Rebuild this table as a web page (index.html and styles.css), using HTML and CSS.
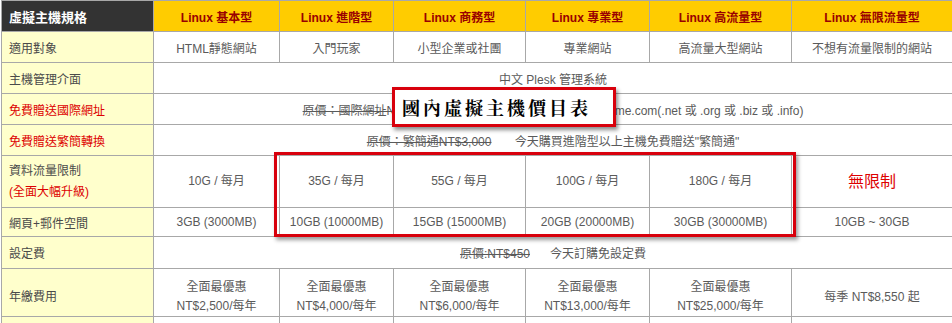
FILE: index.html
```html
<!DOCTYPE html>
<html lang="zh-Hant">
<head>
<meta charset="utf-8">
<title>國內虛擬主機價目表</title>
<link rel="stylesheet" href="styles.css">
</head>
<body>
<div class="wrap">
  <table class="price">
    <colgroup>
      <col class="c0"><col class="c1"><col class="c2"><col class="c3"><col class="c4"><col class="c5"><col class="c6">
    </colgroup>
    <tr class="head">
      <th class="corner">虛擬主機規格</th>
      <th>Linux 基本型</th>
      <th>Linux 進階型</th>
      <th>Linux 商務型</th>
      <th>Linux 專業型</th>
      <th>Linux 高流量型</th>
      <th>Linux 無限流量型</th>
    </tr>
    <tr class="r31">
      <td class="lab">適用對象</td>
      <td>HTML靜態網站</td>
      <td>入門玩家</td>
      <td>小型企業或社團</td>
      <td>專業網站</td>
      <td>高流量大型網站</td>
      <td>不想有流量限制的網站</td>
    </tr>
    <tr class="r31">
      <td class="lab">主機管理介面</td>
      <td colspan="6">中文 Plesk 管理系統</td>
    </tr>
    <tr class="r31">
      <td class="lab red">免費贈送國際網址</td>
      <td colspan="6"><s>原價：國際網址NT$800</s>&nbsp;&nbsp;&nbsp;&nbsp;今天購買即贈送國際網址 yourname.com(.net 或 .org 或 .biz 或 .info)</td>
    </tr>
    <tr class="r31">
      <td class="lab red">免費贈送繁簡轉換</td>
      <td colspan="6"><s>原價：繁簡通NT$3,000</s>&nbsp;&nbsp;&nbsp;&nbsp;&nbsp;&nbsp; 今天購買進階型以上主機免費贈送"繁簡通"</td>
    </tr>
    <tr class="r52">
      <td class="lab">資料流量限制<br><span class="red">(全面大幅升級)</span></td>
      <td>10G / 每月</td>
      <td>35G / 每月</td>
      <td>55G / 每月</td>
      <td>100G / 每月</td>
      <td>180G / 每月</td>
      <td class="unl">無限制</td>
    </tr>
    <tr class="r29">
      <td class="lab">網頁+郵件空間</td>
      <td>3GB (3000MB)</td>
      <td>10GB (10000MB)</td>
      <td>15GB (15000MB)</td>
      <td>20GB (20000MB)</td>
      <td>30GB (30000MB)</td>
      <td>10GB ~ 30GB</td>
    </tr>
    <tr class="r32">
      <td class="lab">設定費</td>
      <td colspan="6"><s>原價:NT$450</s>&nbsp;&nbsp;&nbsp;&nbsp;&nbsp; 今天訂購免設定費</td>
    </tr>
    <tr class="r42">
      <td class="lab">年繳費用</td>
      <td>全面最優惠<br>NT$2,500/每年</td>
      <td>全面最優惠<br>NT$4,000/每年</td>
      <td>全面最優惠<br>NT$6,000/每年</td>
      <td>全面最優惠<br>NT$13,000/每年</td>
      <td>全面最優惠<br>NT$25,000/每年</td>
      <td>每季 NT$8,550 起</td>
    </tr>
    <tr class="r31">
      <td class="lab"></td>
      <td></td><td></td><td></td><td></td><td></td><td></td>
    </tr>
  </table>
  <div class="title-box">國內虛擬主機價目表</div>
  <div class="highlight"></div>
</div>
</body>
</html>
```
FILE: styles.css
```css
html, body {
  margin: 0;
  padding: 0;
  background: #ffffff;
}
.wrap {
  position: relative;
  width: 952px;
  height: 323px;
  overflow: hidden;
}
.price {
  margin-left: 1px;
  border-collapse: collapse;
  table-layout: fixed;
  width: 951px;
  font-family: "Liberation Sans", "Noto Sans CJK TC", sans-serif;
  font-size: 12px;
  color: #5a5a5a;
}
.c0 { width: 152px; }
.c1 { width: 126px; }
.c2 { width: 114px; }
.c3 { width: 132px; }
.c4 { width: 124px; }
.c5 { width: 142px; }
.c6 { width: 161px; }
.price th, .price td {
  border: 1px solid #a8a8a8;
  padding: 0;
  text-align: center;
  vertical-align: middle;
}
.head th {
  height: 30px;
  background: #ffcc00;
  color: #990000;
  font-weight: bold;
  font-size: 12px;
}
.head th.corner {
  background: #333333;
  color: #ffffff;
  text-align: left;
  padding-left: 7px;
  font-size: 13px;
}
.price td.lab {
  background: #ffffcc;
  text-align: left;
  padding-left: 7px;
  color: #4a4a4a;
}
.red, .price td.red { color: #dd0000; }
.r31 td { height: 30px; }
.r52 td { height: 51px; line-height: 21px; }
.r29 td { height: 28px; }
.r32 td { height: 31px; }
.r42 td {
  height: 32px;
  line-height: 19px;
  padding-top: 9px;
}
.price td.unl {
  color: #dd0000;
  font-size: 16px;
}
s { text-decoration: line-through; }
.title-box {
  position: absolute;
  left: 392px;
  top: 87px;
  width: 211px;
  height: 34px;
  border: 3px solid #d8000c;
  background: #ffffff;
  box-shadow: 2px 3px 4px rgba(0, 0, 0, 0.45);
  font-family: "Noto Serif CJK TC", "Noto Sans CJK TC", serif;
  font-weight: bold;
  font-size: 18px;
  letter-spacing: 3px;
  color: #000000;
  line-height: 35px;
  padding-left: 7px;
  box-sizing: content-box;
}
.highlight {
  position: absolute;
  left: 274px;
  top: 152px;
  width: 516px;
  height: 79px;
  border: 3px solid #d8000c;
  box-shadow: 2px 3px 4px rgba(0, 0, 0, 0.4);
}
```
